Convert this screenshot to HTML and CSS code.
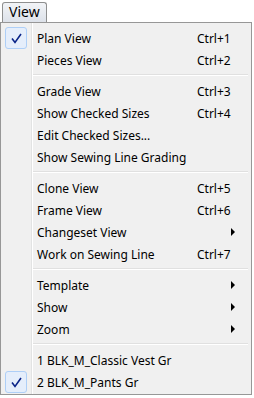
FILE: index.html
```html
<!DOCTYPE HTML>
<html>
<head>
  <meta charset="UTF-8"/>
  <title>View menu</title>
  <link rel="stylesheet" href="styles.css">
</head>
<body>
  <div class="menubar">
    <span class="menubar-item active">View</span>
  </div>

  <div class="menu">
    <div class="item">
      <span class="check"><svg width="11" height="11" viewBox="0 0 11 11"><path d="M1 5.5 L4 9.5 L10 1" fill="none" stroke="#0a2488" stroke-width="1.6"/></svg></span>
      <span class="label">Plan View</span><span class="key">Ctrl+1</span>
    </div>
    <div class="item"><span class="check"></span><span class="label">Pieces View</span><span class="key">Ctrl+2</span></div>
    <div class="sep"></div>
    <div class="item"><span class="check"></span><span class="label">Grade View</span><span class="key">Ctrl+3</span></div>
    <div class="item"><span class="check"></span><span class="label">Show Checked Sizes</span><span class="key">Ctrl+4</span></div>
    <div class="item"><span class="check"></span><span class="label">Edit Checked Sizes...</span></div>
    <div class="item"><span class="check"></span><span class="label">Show Sewing Line Grading</span></div>
    <div class="sep"></div>
    <div class="item"><span class="check"></span><span class="label">Clone View</span><span class="key">Ctrl+5</span></div>
    <div class="item"><span class="check"></span><span class="label">Frame View</span><span class="key">Ctrl+6</span></div>
    <div class="item"><span class="check"></span><span class="label">Changeset View</span><span class="arrow"></span></div>
    <div class="item"><span class="check"></span><span class="label">Work on Sewing Line</span><span class="key">Ctrl+7</span></div>
    <div class="sep"></div>
    <div class="item"><span class="check"></span><span class="label">Template</span><span class="arrow"></span></div>
    <div class="item"><span class="check"></span><span class="label">Show</span><span class="arrow"></span></div>
    <div class="item"><span class="check"></span><span class="label">Zoom</span><span class="arrow"></span></div>
    <div class="sep"></div>
    <div class="item"><span class="check"></span><span class="label">1 BLK_M_Classic Vest Gr</span></div>
    <div class="item">
      <span class="check"><svg width="11" height="11" viewBox="0 0 11 11"><path d="M1 5.5 L4 9.5 L10 1" fill="none" stroke="#0a2488" stroke-width="1.6"/></svg></span>
      <span class="label">2 BLK_M_Pants Gr</span>
    </div>
  </div>
</body>
</html>
```

FILE: styles.css
```css
body {
  margin: 0;
  background-color: #FFF;
  color: #000;
  font: 12px "Noto Sans", "Open Sans", sans-serif;
  -webkit-font-smoothing: antialiased;
}

.menubar {
  height: 22px;
  padding: 2px 0 0 2px;
  box-sizing: border-box;
}

.menubar-item {
  display: inline-block;
  height: 20px;
  line-height: 18px;
  padding: 0 6px;
  box-sizing: border-box;
  border: 1px solid #8e8f8f;
  border-bottom: none;
  border-radius: 3px 3px 0 0;
  background: linear-gradient(#f2f4f7, #dde2ea);
  font-size: 14px;
}

.menu {
  width: 252px;
  box-sizing: border-box;
  border: 1px solid #979797;
  background-color: #F0F0F0;
  background-image: linear-gradient(to right, transparent 30px, #e2e3e3 30px, #e2e3e3 31px, #fff 31px, #fff 32px, transparent 32px);
  padding: 4px 2px 1px 2px;
}

.item {
  display: flex;
  align-items: center;
  height: 22px;
}

.check {
  width: 22px;
  height: 22px;
  margin-left: 2px;
  margin-right: 10px;
  box-sizing: border-box;
  display: flex;
  align-items: center;
  justify-content: center;
}

.check:not(:empty) {
  border: 1px solid #aecff7;
  border-radius: 3px;
  background: #e5eefb;
}

.label {
  flex: 1;
}

.key {
  width: 52px;
}

.arrow {
  width: 0;
  height: 0;
  margin-right: 14px;
  border-top: 4px solid transparent;
  border-bottom: 4px solid transparent;
  border-left: 4px solid #000;
}

.sep {
  height: 9px;
  margin-left: 30px;
  margin-right: 1px;
  background: linear-gradient(transparent 3px, #e0e0e0 3px, #e0e0e0 4px, #fff 4px, #fff 5px, transparent 5px);
}
```
